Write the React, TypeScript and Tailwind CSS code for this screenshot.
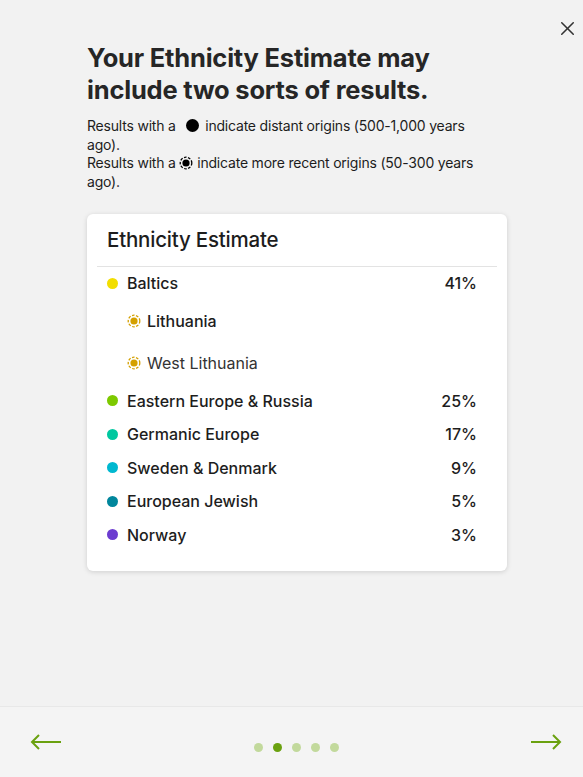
import { X } from 'lucide-react';

const regions = [
  { name: 'Eastern Europe & Russia', pct: '25%', color: 'bg-[#7dc900]' },
  { name: 'Germanic Europe', pct: '17%', color: 'bg-[#00c8a0]' },
  { name: 'Sweden & Denmark', pct: '9%', color: 'bg-[#00b8d0]' },
  { name: 'European Jewish', pct: '5%', color: 'bg-[#00869c]' },
  { name: 'Norway', pct: '3%', color: 'bg-[#6c3cd0]' },
];

function RecentDot({ color = '#d4a000', size = 14 }: { color?: string; size?: number }) {
  return (
    <svg width={size} height={size} viewBox="0 0 14 14" className="shrink-0">
      <circle cx="7" cy="7" r="5.8" fill="none" stroke={color} strokeWidth="1.3" strokeDasharray="2.6 1.5" />
      <circle cx="7" cy="7" r="3.6" fill={color} />
    </svg>
  );
}

function Arrow({ dir }: { dir: 'left' | 'right' }) {
  return (
    <svg width="32" height="20" viewBox="0 0 32 20" fill="none" stroke="#6aa10f" strokeWidth="2">
      {dir === 'left' ? (
        <>
          <path d="M31 10H2" />
          <path d="M9 3L2 10l7 7" />
        </>
      ) : (
        <>
          <path d="M1 10h29" />
          <path d="M23 3l7 7-7 7" />
        </>
      )}
    </svg>
  );
}

export default function App() {
  return (
    <div
      className="w-[583px] h-[777px] bg-[#f2f2f2] flex flex-col text-[#1d1d1d] relative"
      style={{ fontFamily: 'Inter, "Noto Sans", sans-serif' }}
    >
      <button className="absolute right-[4px] top-[17px] text-[#333]">
        <X size={23} strokeWidth={1.6} />
      </button>

      <div className="flex-1 pl-[87px] pt-[42px]">
        <h1 className="w-[410px] text-[25.5px] font-bold leading-[32px] tracking-[-0.2px] text-[#262626]">
          Your Ethnicity Estimate may include two sorts of results.
        </h1>
        <p className="w-[410px] mt-[11px] text-[14px] leading-[18.7px] tracking-[-0.2px]">
          Results with a{' '}
          <span className="inline-block w-[13px] h-[13px] rounded-full bg-black align-[-1px] ml-[7px] mr-[2px]" /> indicate
          distant origins (500-1,000 years ago).
          <br />
          Results with a{' '}
          <span className="inline-flex align-[-2px]">
            <RecentDot color="#000" size={14} />
          </span>{' '}
          indicate more recent origins (50-300 years ago).
        </p>

        <div className="mt-[22px] w-[420px] bg-white rounded-[6px] shadow-[0_1px_5px_rgba(0,0,0,0.15)] px-[10px] pb-[20px]">
          <div className="px-[10px] pt-[14px] pb-[14px] text-[20.5px] font-medium tracking-[-0.2px] leading-[24px]">
            Ethnicity Estimate
          </div>
          <div className="border-t border-[#e3e3e3]" />
          <div className="px-[10px]">
            <div className="flex items-center h-[33px] text-[16px] font-medium">
              <span className="w-[11px] h-[11px] rounded-full bg-[#f2de00] mr-[9px]" />
              <span className="flex-1">Baltics</span>
              <span className="mr-[10px]">41%</span>
            </div>
            <div className="flex items-center h-[42px] pl-[20px] text-[16px] font-medium gap-[6px]">
              <RecentDot />
              <span>Lithuania</span>
            </div>
            <div className="flex items-center h-[42px] pl-[20px] text-[16px] text-[#333] gap-[6px]">
              <RecentDot />
              <span>West Lithuania</span>
            </div>
            {regions.map((r) => (
              <div key={r.name} className="flex items-center h-[33.5px] text-[16px] font-medium">
                <span className={`w-[11px] h-[11px] rounded-full ${r.color} mr-[9px]`} />
                <span className="flex-1">{r.name}</span>
                <span className="mr-[10px]">{r.pct}</span>
              </div>
            ))}
          </div>
        </div>
      </div>

      <div className="h-[71px] border-t border-[#e8e8e8] bg-[#f4f4f4] flex items-center justify-between pl-[30px] pr-[21px]">
        <Arrow dir="left" />
        <div className="flex gap-[10px] mt-[10px]">
          <span className="w-[9px] h-[9px] rounded-full bg-[#c2d99c]" />
          <span className="w-[9px] h-[9px] rounded-full bg-[#6aa10f]" />
          <span className="w-[9px] h-[9px] rounded-full bg-[#c2d99c]" />
          <span className="w-[9px] h-[9px] rounded-full bg-[#c2d99c]" />
          <span className="w-[9px] h-[9px] rounded-full bg-[#c2d99c]" />
        </div>
        <Arrow dir="right" />
      </div>
    </div>
  );
}
